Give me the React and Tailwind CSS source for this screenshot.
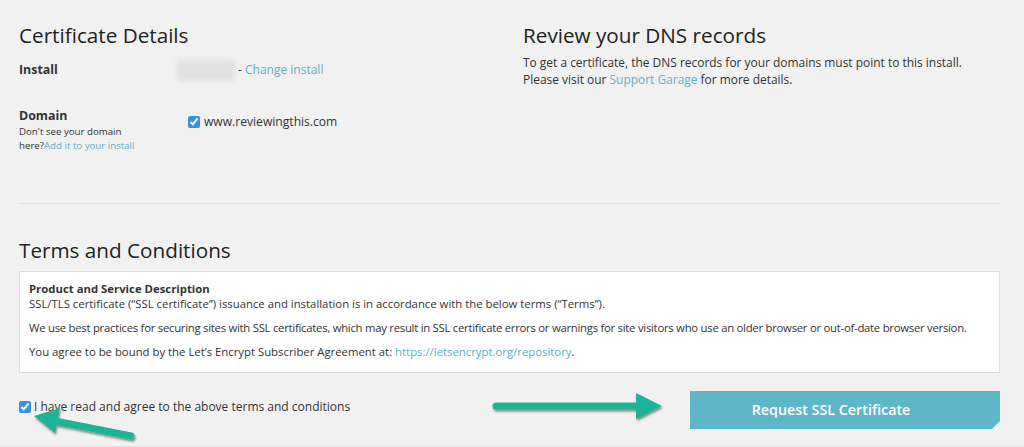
import React from 'react';

function Arrows() {
  return (
    <svg className="absolute inset-0 pointer-events-none" width="1024" height="447" viewBox="0 0 1024 447">
      <defs>
        <filter id="arrowShadow" x="-20%" y="-50%" width="140%" height="200%">
          <feDropShadow dx="1" dy="2" stdDeviation="1.2" floodColor="#000" floodOpacity="0.45" />
        </filter>
      </defs>
      <g fill="#1bb397" stroke="#1bb397" filter="url(#arrowShadow)">
        {/* right arrow pointing at the button */}
        <line x1="496" y1="406" x2="642" y2="406" strokeWidth="7" strokeLinecap="round" />
        <polygon points="636,393 662,406 636,419" stroke="none" />
        {/* left arrow pointing at the checkbox */}
        <line x1="131" y1="436" x2="55" y2="421" strokeWidth="7" strokeLinecap="round" />
        <polygon points="60,408 34,416 55,433" stroke="none" />
      </g>
    </svg>
  );
}

export default function App() {
  return (
    <div className="relative min-h-[447px] overflow-hidden bg-[#f1f1f1] font-['Open_Sans',sans-serif] text-[#333] pl-[19px] pr-[24px] border-b border-[#e6e6e6]">
      {/* Top: details + DNS */}
      <div className="flex pt-[20px]">
        <div className="w-[504px] shrink-0">
          <h2 className="text-[20.7px] leading-[30px] text-[#222]">Certificate Details</h2>
          <div className="flex items-center mt-[9px] h-[22px] text-[12px]">
            <div className="w-[158px] font-bold text-[12.4px]">Install</div>
            <div className="w-[58px] h-[22px] bg-[#e2e2e2] blur-[2px] rounded-sm" />
            <span className="ml-[3px]">- <span className="text-[#5eb1c2]">Change install</span></span>
          </div>
          <div className="flex mt-[26px]">
            <div className="w-[169px]">
              <div className="text-[12.4px] leading-[18px] font-bold">Domain</div>
              <div className="text-[9.7px] leading-[14px]">Don't see your domain</div>
              <div className="text-[9.7px] leading-[14px]">
                here?<span className="text-[#5eb1c2]">Add it to your install</span>
              </div>
            </div>
            <label className="flex items-center gap-[4px] mt-[6px] h-[18px] text-[12.1px]">
              <input type="checkbox" checked readOnly className="w-[12px] h-[12px] accent-[#3a8ee6]" />
              www.reviewingthis.com
            </label>
          </div>
        </div>
        <div className="flex-1">
          <h2 className="text-[20.7px] leading-[30px] text-[#222]">Review your DNS records</h2>
          <p className="mt-[4px] text-[11.95px] leading-[17px]">
            To get a certificate, the DNS records for your domains must point to this install.
            <br />
            Please visit our <span className="text-[#5eb1c2]">Support Garage</span> for more details.
          </p>
        </div>
      </div>

      <div className="mt-[50px] h-px bg-[#e3e3e3]" />

      {/* Terms */}
      <h2 className="mt-[31px] text-[20.7px] leading-[30px] text-[#222]">Terms and Conditions</h2>
      <div className="mt-[6px] h-[102px] overflow-hidden bg-white border border-[#dcdcdc] px-[9px] pt-[9px] text-[11.35px] leading-[15px]">
        <div>
          <div className="font-bold">Product and Service Description</div>
          <p>SSL/TLS certificate (“SSL certificate”) issuance and installation is in accordance with the below terms (“Terms”).</p>
        </div>
        <p className="mt-[9px] tracking-[-0.27px] whitespace-nowrap">
          We use best practices for securing sites with SSL certificates, which may result in SSL certificate errors or warnings for site visitors who use an older browser or out-of-date browser version.
        </p>
        <p className="mt-[9px]">
          You agree to be bound by the Let’s Encrypt Subscriber Agreement at: <span className="text-[#5eb1c2]">https://letsencrypt.org/repository</span>.
        </p>
        <div className="mt-[9px] font-bold">Termination</div>
      </div>

      {/* Footer row */}
      <div className="flex justify-between items-start mt-[18px]">
        <label className="flex items-center gap-[3px] mt-[7px] h-[18px] text-[12px]">
          <input type="checkbox" checked readOnly className="w-[12px] h-[12px] accent-[#3a8ee6]" />
          I have read and agree to the above terms and conditions
        </label>
        <button className="w-[310px] h-[38px] pr-[28px] bg-[#5eb6c8] text-white text-[14.3px] font-semibold [clip-path:polygon(0_0,100%_0,100%_calc(100%-8px),calc(100%-8px)_100%,0_100%)]">
          Request SSL Certificate
        </button>
      </div>

      <Arrows />
    </div>
  );
}
